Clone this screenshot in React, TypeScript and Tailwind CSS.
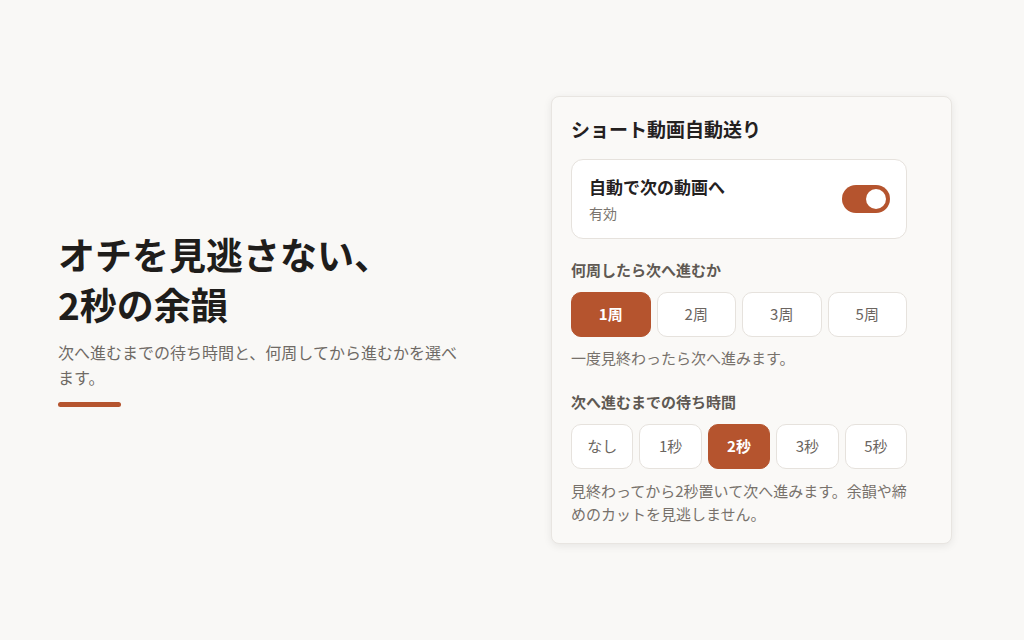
import { useState } from 'react';

const FONT = { fontFamily: '"Noto Sans CJK JP", "Noto Sans", sans-serif' };

function Segment({
  options,
  value,
  onChange,
}: {
  options: string[];
  value: string;
  onChange: (v: string) => void;
}) {
  return (
    <div className="flex gap-[6px] w-[336px]">
      {options.map((o) => {
        const active = o === value;
        return (
          <button
            key={o}
            onClick={() => onChange(o)}
            className={
              active
                ? 'flex-1 h-[45px] rounded-[10px] bg-[#b5542e] border border-[#b5542e] text-white text-[15px] font-bold'
                : 'flex-1 h-[45px] rounded-[10px] bg-white border border-[#e6e2dd] text-[#6b6560] text-[15px]'
            }
          >
            {o}
          </button>
        );
      })}
    </div>
  );
}

export default function App() {
  const [enabled, setEnabled] = useState(true);
  const [loops, setLoops] = useState('1周');
  const [wait, setWait] = useState('2秒');

  return (
    <div style={FONT} className="w-full h-[640px] bg-[#f9f8f6] flex items-center justify-between pl-[58px] pr-[72px]">
      <div className="w-[410px] flex flex-col -mt-[4px]">
        <h1 className="text-[37px] leading-[50px] font-bold text-[#1f1d1b]">
          オチを見逃さない、
          <br />
          2秒の余韻
        </h1>
        <p className="mt-[11px] text-[16px] leading-[25px] text-[#6f6a65]">
          次へ進むまでの待ち時間と、何周してから進むかを選べます。
        </p>
        <div className="mt-[12px] w-[63px] h-[5px] rounded-full bg-[#b5542e]" />
      </div>

      <div className="w-[401px] bg-[#faf9f7] border border-[#e8e5e1] rounded-[8px] shadow-[0_2px_8px_rgba(0,0,0,0.08)] pt-[18px] pb-[18px] pl-[19px] pr-[20px]">
        <h2 className="text-[19px] leading-[28px] font-bold text-[#24211f]">ショート動画自動送り</h2>

        <div className="mt-[16px] w-[336px] h-[80px] bg-white border border-[#e6e2dd] rounded-[12px] flex items-center justify-between pl-[17px] pr-[16px]">
          <div className="flex flex-col">
            <span className="text-[17px] leading-[24px] font-bold text-[#24211f]">自動で次の動画へ</span>
            <span className="mt-[4px] text-[14px] leading-[20px] text-[#7a746e]">{enabled ? '有効' : '無効'}</span>
          </div>
          <button
            onClick={() => setEnabled(!enabled)}
            aria-label="toggle"
            className={
              enabled
                ? 'w-[48px] h-[28px] rounded-full bg-[#b5542e] p-[4px] flex justify-end'
                : 'w-[48px] h-[28px] rounded-full bg-[#d6d2cd] p-[4px] flex justify-start'
            }
          >
            <span className="w-[20px] h-[20px] rounded-full bg-white" />
          </button>
        </div>

        <div className="mt-[21px] text-[15px] leading-[20px] font-bold text-[#5f5953]">何周したら次へ進むか</div>
        <div className="mt-[12px]">
          <Segment options={['1周', '2周', '3周', '5周']} value={loops} onChange={setLoops} />
        </div>
        <p className="mt-[11px] text-[15px] leading-[20px] text-[#77716b]">一度見終わったら次へ進みます。</p>

        <div className="mt-[24px] text-[15px] leading-[20px] font-bold text-[#5f5953]">次へ進むまでの待ち時間</div>
        <div className="mt-[12px]">
          <Segment options={['なし', '1秒', '2秒', '3秒', '5秒']} value={wait} onChange={setWait} />
        </div>
        <p className="mt-[10px] w-[336px] text-[15px] leading-[23px] text-[#77716b]">
          見終わってから2秒置いて次へ進みます。余韻や締めのカットを見逃しません。
        </p>
      </div>
    </div>
  );
}
